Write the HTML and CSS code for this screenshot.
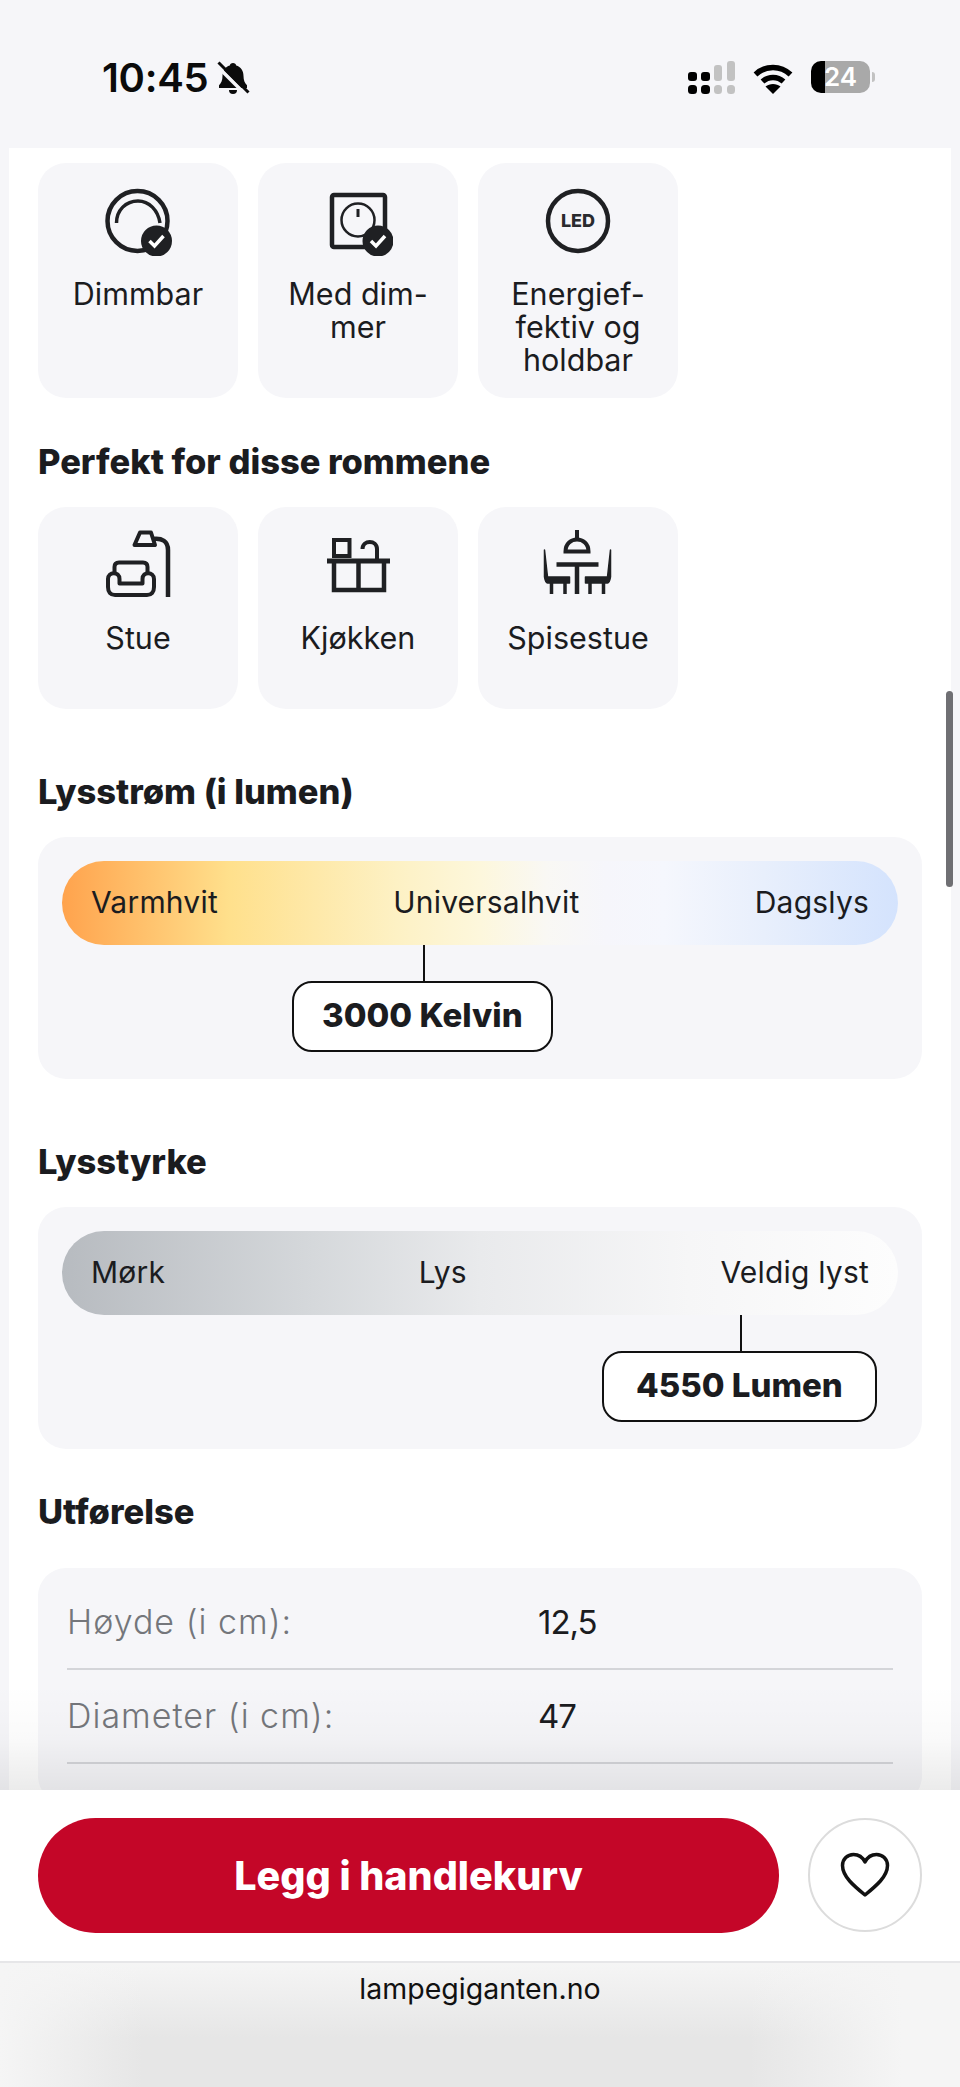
FILE: index.html
```html
<!DOCTYPE html>
<html lang="no">
<head>
    <meta charset="UTF-8">
    <meta name="viewport" content="width=device-width, initial-scale=1.0">
    <title>Lampegiganten</title>
    <link rel="stylesheet" href="styles.css">
</head>
<body>
    <div class="phone">
        <div class="status-bar">
            <div class="status-left">
                <span class="clock">10:45</span>
                <svg class="bell" width="34" height="34" viewBox="0 0 34 34">
                    <path d="M17 2c1.800 0 3 1.200 3.200 2.600 4.600 1.300 7.300 5.200 7.300 10.400 0 4.400 1.300 7 3.500 9.200v2.800H3v-2.800c2.200-2.200 3.500-4.800 3.500-9.200 0-5.200 2.700-9.100 7.300-10.400C14 3.200 15.200 2 17 2z" fill="#0b0b0b"/>
                    <path d="M13 29h8a4 4 0 0 1-8 0z" fill="#0b0b0b"/>
                    <path d="M0 4 30 34" stroke="#f5f5f8" stroke-width="3.500"/>
                    <path d="M2.500 1.500 32.500 31.500" stroke="#0b0b0b" stroke-width="3"/>
                </svg>
            </div>
            <div class="status-right">
                <svg width="47" height="33" viewBox="0 0 47 33">
                    <rect x="0" y="11" width="9" height="9" rx="3" fill="#000"/>
                    <rect x="13" y="11" width="9" height="9" rx="3" fill="#000"/>
                    <rect x="26" y="4" width="8" height="16" rx="3" fill="#c2c2c2"/>
                    <rect x="39" y="0" width="8" height="20" rx="3" fill="#c2c2c2"/>
                    <rect x="0" y="24" width="9" height="9" rx="3.500" fill="#000"/>
                    <rect x="13" y="24" width="9" height="9" rx="3.500" fill="#000"/>
                    <rect x="26" y="24" width="8" height="9" rx="3.500" fill="#c2c2c2"/>
                    <rect x="39" y="24" width="8" height="9" rx="3.500" fill="#c2c2c2"/>
                </svg>
                <svg class="wifi" width="40" height="31" viewBox="0 0 40 31">
                    <path d="M2.500 11.500C12.500 2 27.500 2 37.500 11.500" fill="none" stroke="#000" stroke-width="5.500"/>
                    <path d="M9.500 18.500C15.500 13 24.500 13 30.500 18.500" fill="none" stroke="#000" stroke-width="5.500"/>
                    <path d="M20 31 12.500 23.500C16.500 20 23.500 20 27.500 23.500z" fill="#000"/>
                </svg>
                <div class="battery">24</div>
            </div>
        </div>

        <div class="content">
            <div class="tile-row">
                <div class="tile">
                    <svg class="tile-icon" width="70" height="70" viewBox="0 0 70 70">
                        <circle cx="34.500" cy="35" r="30" fill="none" stroke="#1f2023" stroke-width="4.500"/>
                        <path d="M13.500 37C13.500 24 23 15 35 15C46 15 55 24 57 37" fill="none" stroke="#1f2023" stroke-width="3.500"/>
                        <circle cx="53.500" cy="55" r="15.500" fill="#1f2023"/>
                        <path d="M46.500 55 51.500 60 60.500 50" fill="none" stroke="#fff" stroke-width="3.500"/>
                    </svg>
                    <span>Dimmbar</span>
                </div>
                <div class="tile">
                    <svg class="tile-icon" width="70" height="70" viewBox="0 0 70 70">
                        <rect x="9" y="9" width="53" height="52" rx="2" fill="none" stroke="#1f2023" stroke-width="4.500"/>
                        <circle cx="35" cy="34" r="16.500" fill="none" stroke="#1f2023" stroke-width="2.500"/>
                        <path d="M35 23V31" stroke="#1f2023" stroke-width="3"/>
                        <circle cx="55" cy="55" r="15.500" fill="#1f2023"/>
                        <path d="M48 55 53 60 62 50" fill="none" stroke="#fff" stroke-width="3.500"/>
                    </svg>
                    <span>Med dim-<br>mer</span>
                </div>
                <div class="tile">
                    <svg class="tile-icon" width="70" height="70" viewBox="0 0 70 70">
                        <circle cx="35" cy="35" r="30" fill="none" stroke="#1f2023" stroke-width="4.500"/>
                        <text x="35" y="41" text-anchor="middle" class="led-text">LED</text>
                    </svg>
                    <span>Energief-<br>fektiv og<br>holdbar</span>
                </div>
            </div>

            <h2 class="heading heading-rooms">Perfekt for disse rommene</h2>
            <div class="tile-row">
                <div class="tile">
                    <svg class="tile-icon" width="70" height="70" viewBox="0 0 70 70">
                        <path d="M37 2.500H48L52 15H31.500z" fill="none" stroke="#1f2023" stroke-width="4" stroke-linejoin="round"/>
                        <path d="M50 9C59 8 65 11 65 20V67" fill="none" stroke="#1f2023" stroke-width="4.500"/>
                        <path d="M11.500 44V37C11.500 34 13 32.500 16 32.500H40C43 32.500 44.500 34 44.500 37V44" fill="none" stroke="#1f2023" stroke-width="4"/>
                        <path d="M16.500 53.500V49C16.500 41 5 41.500 5 49V57C5 62 7.500 65 12 65H44C48.500 65 51 62 51 57V49C51 41.500 39.500 41 39.500 49V53.500z" fill="none" stroke="#1f2023" stroke-width="4" stroke-linejoin="round"/>
                    </svg>
                    <span>Stue</span>
                </div>
                <div class="tile">
                    <svg class="tile-icon" width="70" height="70" viewBox="0 0 70 70">
                        <path d="M4 31H67" stroke="#1f2023" stroke-width="5"/>
                        <rect x="11" y="10" width="15.500" height="16" fill="none" stroke="#1f2023" stroke-width="4"/>
                        <path d="M11 31V60H61V31M35.500 31V60" fill="none" stroke="#1f2023" stroke-width="4.500"/>
                        <path d="M39.500 19C39.500 9.500 54 9.500 54 19V29" fill="none" stroke="#1f2023" stroke-width="4"/>
                    </svg>
                    <span>Kjøkken</span>
                </div>
                <div class="tile">
                    <svg class="tile-icon" width="70" height="70" viewBox="1.500 0 70 70">
                        <path d="M35.500 0V9" stroke="#1f2023" stroke-width="4"/>
                        <path d="M24 21.500C24 5.500 47 5.500 47 21.500z" fill="none" stroke="#1f2023" stroke-width="4"/>
                        <path d="M15 34.500H57M35.500 34.500V64" fill="none" stroke="#1f2023" stroke-width="4.500"/>
                        <path d="M3 20 6 47H28V53H6C4 53 3.500 50 3 47zM69 20 66 47H44V53H66C68 53 68.500 50 69 47z" fill="#1f2023" stroke="#1f2023" stroke-width="1.500" stroke-linejoin="round"/>
                        <path d="M10 53V64M23.500 53V64M48.500 53V64M62 53V64" stroke="#1f2023" stroke-width="3.500"/>
                    </svg>
                    <span>Spisestue</span>
                </div>
            </div>

            <h2 class="heading">Lysstrøm (i lumen)</h2>
            <div class="panel">
                <div class="bar bar-warm">
                    <span>Varmhvit</span>
                    <span>Universalhvit</span>
                    <span>Dagslys</span>
                </div>
                <div class="marker" style="margin-left: 230px">
                    <div class="marker-line"></div>
                    <div class="marker-value">3000 Kelvin</div>
                </div>
            </div>

            <h2 class="heading">Lysstyrke</h2>
            <div class="panel">
                <div class="bar bar-grey">
                    <span>Mørk</span>
                    <span>Lys</span>
                    <span>Veldig lyst</span>
                </div>
                <div class="marker" style="margin-left: 540px">
                    <div class="marker-line"></div>
                    <div class="marker-value marker-value-wide">4550 Lumen</div>
                </div>
            </div>

            <h2 class="heading heading-specs">Utførelse</h2>
            <div class="specs">
                <div class="spec-row">
                    <span class="spec-label">Høyde (i cm):</span>
                    <span class="spec-value">12,5</span>
                </div>
                <div class="spec-row">
                    <span class="spec-label">Diameter (i cm):</span>
                    <span class="spec-value">47</span>
                </div>
            </div>
        </div>

        <div class="scroll-thumb"></div>

        <div class="buy-bar">
            <button type="button" class="buy-button">Legg i handlekurv</button>
            <button type="button" class="wish-button" aria-label="Favoritt">
                <svg width="50" height="46" viewBox="0 0 50 46">
                    <path d="M25 43C14 34 2.500 24.500 2.500 13.500C2.500 7 7.500 2.500 13.500 2.500C18.500 2.500 22.500 5 25 10C27.500 5 31.500 2.500 36.500 2.500C42.500 2.500 47.500 7 47.500 13.500C47.500 24.500 36 34 25 43z" fill="none" stroke="#111" stroke-width="3.500" stroke-linejoin="round"/>
                </svg>
            </button>
        </div>

        <div class="browser-bar">lampegiganten.no</div>
    </div>
</body>
</html>
```

FILE: styles.css
```css
* {
    box-sizing: border-box;
}

body {
    margin: 0;
    font-family: Inter, "Noto Sans", sans-serif;
    color: #1b1c1f;
    background-color: #f6f6f9;
}

.phone {
    position: relative;
    display: flex;
    flex-direction: column;
    height: 2087px;
    overflow: hidden;
}

/* status bar */
.status-bar {
    flex: 0 0 148px;
    display: flex;
    justify-content: space-between;
    align-items: flex-start;
    padding: 61px 90px 0 102px;
}

.status-left {
    display: flex;
    align-items: center;
    gap: 8px;
}

.clock {
    font-size: 40px;
    font-weight: 600;
    line-height: 34px;
    letter-spacing: -0.3px;
    color: #0b0b0b;
}

.status-right {
    display: flex;
    align-items: flex-start;
    gap: 18px;
}

.wifi {
    margin-top: 2px;
}

.battery {
    position: relative;
    width: 59px;
    height: 32px;
    border-radius: 10px;
    background: linear-gradient(to right, #000 24%, #a9a9a9 24%);
    color: #fff;
    font-size: 26px;
    font-weight: 600;
    line-height: 32px;
    text-align: center;
}

.battery::after {
    content: "";
    position: absolute;
    right: -5px;
    top: 11px;
    width: 3px;
    height: 10px;
    border-radius: 0 3px 3px 0;
    background-color: #c2c2c2;
}

/* scrolling part */
.content {
    flex: 1;
    min-height: 0;
    overflow: hidden;
    margin: 0 9px;
    padding: 15px 29px 0;
    background-color: #fff;
}

.tile-row {
    display: flex;
    gap: 20px;
}

.tile {
    width: 200px;
    min-height: 202px;
    padding: 23px 4px 22px;
    display: flex;
    flex-direction: column;
    align-items: center;
    border-radius: 28px;
    background-color: #f6f6f9;
    font-size: 30.500px;
    line-height: 33px;
    text-align: center;
}

.tile-icon {
    display: block;
    flex: none;
    margin-bottom: 21px;
}

.led-text {
    font-size: 18px;
    font-weight: 800;
    fill: #2a2b2e;
}

.heading {
    margin: 63px 0 25px;
    font-size: 34.500px;
    font-weight: 800;
    line-height: 40px;
}

.heading-rooms {
    margin-top: 44px;
}

.heading-specs {
    margin: 43px 0 36px;
}

.panel {
    padding: 24px 24px 27px;
    border-radius: 28px;
    background-color: #f6f6f9;
}

.bar {
    display: flex;
    justify-content: space-between;
    align-items: center;
    height: 84px;
    padding: 0 29px 3px;
    border-radius: 42px;
    font-size: 30px;
    letter-spacing: 0.2px;
}

.bar-warm {
    background: linear-gradient(to right, #ffa34d 0%, #ffe08c 20%, #fdf1c4 40%, #fdf7dc 50%, #f9f8f4 58%, #f6f6fb 65%, #f5f7fd 72%, #e8effc 84%, #d4e3fd 100%);
}

.bar-grey {
    background: linear-gradient(to right, #b7bbc0 0%, #d5d8db 30%, #e9eaec 50%, #f6f6f7 75%, #fdfdfd 100%);
}

.marker {
    display: flex;
    flex-direction: column;
    align-items: center;
    width: fit-content;
}

.marker-line {
    width: 2px;
    height: 36px;
    margin-left: 3px;
    background-color: #111;
}

.marker-value {
    height: 71px;
    padding: 0 28px;
    border: 2px solid #111;
    border-radius: 20px;
    background-color: #fff;
    font-size: 33px;
    font-weight: 800;
    line-height: 65px;
    white-space: nowrap;
}

.marker-value-wide {
    padding: 0 32px;
}

.specs {
    padding: 8px 29px 40px;
    border-radius: 28px;
    background-color: #f6f6f9;
    font-size: 33px;
}

.spec-row {
    display: grid;
    grid-template-columns: 471px 1fr;
    align-items: center;
    height: 94px;
    padding-bottom: 1px;
    border-bottom: 2px solid #d4d5d9;
}

.spec-label {
    color: #74767b;
    font-size: 34px;
    font-weight: 300;
    letter-spacing: 1px;
}

.spec-value {
    letter-spacing: -1px;
}

.scroll-thumb {
    position: absolute;
    left: 946px;
    top: 691px;
    width: 7px;
    height: 196px;
    border-radius: 4px;
    background-color: #6f6f73;
}

/* bottom bars */
.buy-bar {
    position: relative;
    flex: 0 0 173px;
    display: flex;
    align-items: flex-start;
    justify-content: space-between;
    padding: 28px 38px 0;
    background-color: #fff;
    border-bottom: 2px solid #e6e6e8;
}

.buy-bar::before {
    content: "";
    position: absolute;
    left: 0;
    right: 0;
    bottom: 100%;
    height: 105px;
    background: linear-gradient(to bottom, rgba(0, 0, 0, 0), rgba(0, 0, 0, 0.02) 50%, rgba(0, 0, 0, 0.08));
}

.buy-button {
    width: 741px;
    height: 115px;
    padding: 0;
    border: none;
    border-radius: 58px;
    background-color: #c40628;
    color: #fff;
    font-family: inherit;
    font-size: 39.500px;
    font-weight: 800;
}

.wish-button {
    display: flex;
    align-items: center;
    justify-content: center;
    width: 114px;
    height: 114px;
    padding: 0;
    border: 2px solid #dcdcdc;
    border-radius: 50%;
    background-color: #fff;
}

.browser-bar {
    flex: 0 0 124px;
    padding-top: 9px;
    background:
        linear-gradient(to right, #f5f5f5, rgba(245, 245, 245, 0) 15%, rgba(245, 245, 245, 0) 78%, #f5f5f5 94%),
        linear-gradient(to bottom, #f5f5f5, #e6e6e6 60%);
    color: #111;
    font-size: 28.500px;
    line-height: 34px;
    text-align: center;
}
```
